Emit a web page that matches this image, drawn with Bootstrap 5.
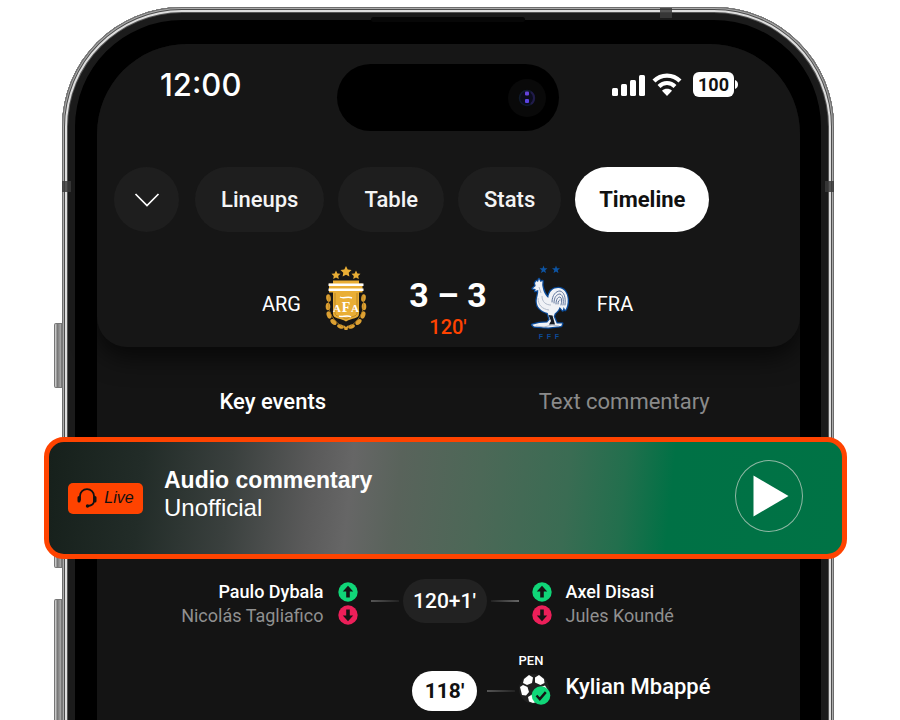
<!DOCTYPE html>
<html lang="en">
<head>
<meta charset="utf-8">
<meta name="viewport" content="width=device-width, initial-scale=1">
<title>Match timeline</title>
<link href="https://cdn.jsdelivr.net/npm/bootstrap@5.3.0/dist/css/bootstrap.min.css" rel="stylesheet">
<style>
  body { background: #fff; color: #fff; font-family: Roboto, "Liberation Sans", sans-serif; font-weight: 500; font-size: 22px; line-height: 28px; }
  .stage { padding: 7px 66px 0 62px; min-height: 100vh; }
  .phone { min-height: calc(100vh + 33px); margin-bottom: -40px; padding: 37px 34px 0 35px; background: #000; border-radius: 120px 120px 0 0;
    box-shadow: inset 0 0 0 1px #6d6d6d, inset 0 0 0 2px #a9a9a9, inset 0 0 0 3px #4c4c4c, inset 0 0 0 5px #dedede, inset 0 0 0 6px #555, inset 0 0 0 13px #1b1b1b; }
  .screen { background: #141414; border-radius: 90px 90px 0 0; min-height: calc(100vh - 4px); }
  .side-key { position: absolute; left: -8px; width: 9px; border: 1px solid #777; border-right-width: 2px; background: linear-gradient(90deg, #ddd, #777 40%, #aaa); border-radius: 2px 0 0 2px; }
  .key-a { top: 316px; height: 65px; }
  .key-b { top: 500px; height: 61px; }
  .key-c { top: 592px; bottom: 0; }
  .band { position: absolute; background: #3b3b3b; opacity: .85; }
  .band-l { left: 0; top: 174px; width: 9px; height: 11px; }
  .band-r { right: 0; top: 174px; width: 9px; height: 11px; }
  .band-t { right: 162px; top: 1px; width: 12px; height: 10px; }
  .slit { position: absolute; top: 10px; left: 40%; width: 20%; height: 5px; background: #070707; border-radius: 3px; }
  .match-head { background: #161616; border-radius: 90px 90px 30px 30px; box-shadow: 0 10px 26px rgba(0,0,0,.65); padding: 20px 18px 7px 17px; }
  .status { display: grid; grid-template-columns: 1fr 222px 1fr; }
  .clock { font-family: Inter, sans-serif; font-size: 31px; line-height: 42px; padding-left: 46px; }
  .indicators { padding-right: 43px; height: 42px; gap: 7px; }
  .island { height: 67px; border-radius: 34px; background: #000; padding-right: 12px; }
  .chips { gap: 14px; margin-top: 36px; }
  .chip { border: 0; border-radius: 34px; height: 65px; background: #1e1e1e; color: #f4f4f4; padding: 0 26px; font-weight: 500; font-size: 22px; line-height: 28px; }
  .chip-round { width: 65px; padding: 0; margin-right: 2px; }
  .chip-on { background: #fff; color: #111; padding: 0 24px; font-weight: 700; }
  .score { display: grid; grid-template-columns: 1fr 38px 64px 112px 64px 38px 1fr; column-gap: 14px; margin-top: 32px; align-items: center; }
  .team { font-size: 20px; font-weight: 400; padding-top: 4px; }
  .tally { padding-top: 12px; }
  .goals { font-weight: 700; font-size: 34px; line-height: 38px; }
  .minute { color: #ff4300; font-size: 20px; line-height: 26px; }
  .views { padding: 39px 0 19px; }
  .view { color: #8a8a8a; text-decoration: none; line-height: 32px; font-weight: 400; }
  .view-on { color: #fff; font-weight: 500; }
  .audio { position: relative; margin: 0 -47px 0 -53px; height: 122px; border: 5px solid #ff4300; border-radius: 20px; padding: 0 39px 0 19px;
    background: linear-gradient(96deg, #16201b 0%, #222c28 12%, #3a403e 23%, #5a5a5a 33%, #666 38%, #59635b 44%, #4c6857 54%, #3a6c53 65%, #226f4d 72%, #007145 78%, #007345 100%);
    font-family: "Liberation Sans", Arial, sans-serif; }
  .live { background: #ff4300; color: #111; border-radius: 5px; width: 75px; height: 31px; font-size: 16px; font-style: italic; font-weight: 400; gap: 7px; }
  .audio-copy { font-size: 23px; line-height: 28px; margin-left: 21px; padding-bottom: 8px; }
  .audio-note { font-size: 24px; }
  .play { width: 68px; height: 72px; border: 1px solid #8fb8a4; border-radius: 50%; background: transparent; padding: 0 0 0 4px; margin-bottom: 5px; }
  .event { display: grid; grid-template-columns: 1fr 46px 32px 84px 32px 46px 1fr; padding-right: 8px; }
  .event-a { margin-top: 20px; margin-bottom: 25px; }
  .event-b { align-items: end; }
  .names { font-size: 18px; line-height: 24px; padding: 1px 1px 0; }
  .dim { color: #909090; font-weight: 400; }
  .swap { gap: 3px; padding-top: 3px; }
  .pill { background: #222; border-radius: 22px; height: 44px; font-size: 21px; }
  .pill-on { background: #fff; color: #111; width: 65px; height: 40px; font-weight: 700; }
  .dash { height: 2px; width: 28px; background: linear-gradient(90deg, #555, #222); }
  .dash-r { background: linear-gradient(90deg, #222, #666); }
  .rail { height: 44px; }
  .rail-b { height: 40px; }
  .pen { font-size: 13px; line-height: 15px; margin-bottom: 5px; }
  .scorer { height: 48px; padding-left: 1px; }
  .ball { padding-bottom: 6px; }
</style>
</head>
<body>
<div class="stage overflow-hidden">
  <div class="phone position-relative">
    <span class="side-key key-a"></span><span class="side-key key-b"></span><span class="side-key key-c"></span>
    <span class="band band-l"></span><span class="band band-r"></span><span class="band band-t"></span><span class="slit"></span>
    <main class="screen">
      <header class="match-head">
        <div class="status">
          <div class="clock">12:00</div>
          <div class="island d-flex align-items-center justify-content-end">
            <svg width="40" height="40" viewBox="0 0 40 40" aria-hidden="true"><circle cx="20" cy="20" r="19" fill="#090909"/><circle cx="20" cy="20" r="7.500" fill="#0b0c1c" stroke="#101b2e" stroke-width="1.500"/><path d="M24 14a7.500 7.500 0 0 1 0 12" fill="none" stroke="#211b4b" stroke-width="2"/><rect x="18" y="13.500" width="4" height="4" rx="1" fill="#6544dc"/><rect x="18" y="21" width="4" height="4" rx="1" fill="#5a43e2"/></svg>
          </div>
          <div class="indicators d-flex align-items-center justify-content-end">
            <svg width="33" height="24" viewBox="0 0 33 24" fill="#fff" aria-hidden="true"><rect x="0" y="15" width="6" height="8" rx="1.500"/><rect x="9" y="11" width="6" height="12" rx="1.500"/><rect x="18" y="7" width="6" height="16" rx="1.500"/><rect x="27" y="2" width="6" height="21" rx="1.500"/></svg>
            <svg width="30" height="24" viewBox="0 0 30 24" aria-hidden="true"><path d="M2 8C9 .8 21 .8 28 8" fill="none" stroke="#fff" stroke-width="4.200"/><path d="M7 13.500c4.500-4.700 11.500-4.700 16 0" fill="none" stroke="#fff" stroke-width="4"/><path d="M15 23l-5-5.200c2.800-2.600 7.200-2.600 10 0z" fill="#fff"/></svg>
            <svg class="ms-1" width="46" height="26" viewBox="0 0 46 26" role="img" aria-label="Battery 100"><rect x="0" y="0" width="41" height="25" rx="6" fill="#fff"/><path d="M42 8c4 1 4 8 0 9z" fill="#fff"/><text x="20.500" y="19" text-anchor="middle" font-family="Roboto, sans-serif" font-size="18" font-weight="700" fill="#111">100</text></svg>
          </div>
        </div>
        <nav class="chips d-flex">
          <button type="button" class="chip chip-round" aria-label="Collapse"><svg width="26" height="16" viewBox="0 0 26 16" fill="none" stroke="#fff" stroke-width="1.700"><path d="M1.500 1L13 12.500 24.500 1"/></svg></button>
          <button type="button" class="chip">Lineups</button>
          <button type="button" class="chip">Table</button>
          <button type="button" class="chip">Stats</button>
          <button type="button" class="chip chip-on">Timeline</button>
        </nav>
        <div class="score text-center">
          <span></span>
          <span class="team">ARG</span>
          <svg width="42" height="72" viewBox="0 0 42 72" role="img" aria-label="Argentina crest" class="mx-auto">
            <g fill="#e9ae35">
              <path d="M21 0l1.700 3.500 3.800.500-2.800 2.700.7 3.900L21 8.700l-3.400 1.900.7-3.900L15.500 4l3.800-.5z"/>
              <path d="M11 4.500l1.400 2.900 3.100.400-2.300 2.200.6 3.100-2.800-1.500-2.800 1.500.6-3.100-2.300-2.200 3.100-.4zM31 4.500l1.400 2.900 3.100.400-2.300 2.200.6 3.100-2.800-1.500-2.800 1.500.6-3.100-2.300-2.200 3.100-.4z"/>
              <path d="M8 14.500h26v3h3.500v9H34v21c0 6-7 4-13 8-6-4-13-2-13-8v-21H4v-9h4z"/>
            </g>
            <path d="M3.500 17.500h35V20h-35zM3.500 22.500h35V25h-35z" fill="#fff"/>
            <path d="M10 27v20c0 4 6 3 11 6 5-3 11-2 11-6V27" fill="none" stroke="#a97823" stroke-width=".7"/>
            <g fill="#dca032">
              <ellipse cx="3.500" cy="32" rx="2.300" ry="3.800" transform="rotate(-8 3.500 32)"/><ellipse cx="3" cy="40.500" rx="2.300" ry="3.800"/><ellipse cx="4" cy="49" rx="2.300" ry="3.800" transform="rotate(-18 4 49)"/><ellipse cx="8.500" cy="56" rx="2.200" ry="3.600" transform="rotate(-48 8.500 56)"/><ellipse cx="15.500" cy="60.500" rx="2" ry="3.500" transform="rotate(-70 15.500 60.500)"/>
              <ellipse cx="38.500" cy="32" rx="2.300" ry="3.800" transform="rotate(8 38.500 32)"/><ellipse cx="39" cy="40.500" rx="2.300" ry="3.800"/><ellipse cx="38" cy="49" rx="2.300" ry="3.800" transform="rotate(18 38 49)"/><ellipse cx="33.500" cy="56" rx="2.200" ry="3.600" transform="rotate(48 33.500 56)"/><ellipse cx="26.500" cy="60.500" rx="2" ry="3.500" transform="rotate(70 26.500 60.500)"/>
              <path d="M18.500 59l2.500 2 2.500-2-1 5h-3z"/>
            </g>
            <path d="M4.500 29c-2.500 12-1 22 13 32M37.500 29c2.500 12 1 22-13 32" fill="none" stroke="#b9831f" stroke-width=".8"/>
            <g fill="#fff" font-family="Liberation Serif, serif" font-weight="700" text-anchor="middle"><text x="12" y="46" font-size="11">A</text><text x="21" y="46" font-size="14">F</text><text x="30" y="46" font-size="11">A</text></g>
            <path d="M15 31c3 2 8-1 12 1M14 50c3 2 8-2 12 1" fill="none" stroke="#fff" stroke-width="1.500"/>
          </svg>
          <div class="tally"><div class="goals text-nowrap">3 – 3</div><div class="minute">120′</div></div>
          <svg width="48" height="76" viewBox="21 6 48 76" role="img" aria-label="France crest" class="mx-auto">
            <path d="M38.500 7.500l1 2.700 3 .1-2.300 1.900.8 2.800-2.500-1.600-2.500 1.600.8-2.800-2.300-1.900 3-.1zM51 7.500l1 2.700 3 .1-2.300 1.900.8 2.800-2.500-1.600-2.500 1.600.8-2.800-2.300-1.900 3-.1z" fill="#0d54a3"/>
            <g fill="#f0f2f6" stroke="#0a4a98" stroke-width="2.600" stroke-linejoin="round" paint-order="stroke">
              <path d="M30 25l1.500-2 1.500 1 1-3 1.500 3 2-1-.3 4c.8 5 2 9 6 13 1-7 5-10 10-10 6 0 9 5 9.500 11 .3 5-1 9-2.500 11l-1.500-3-1 3.500-3-3.500c-1 3-3 5-5 6.500l-1 3 3 7h5.500l-1 2.500-13 1.500-14-1-2-1.800 7-1.700 8-.5 2.500-3-2-6.500c-7-2-11-6-11-12 0-4 2-7 1.500-11l-3 1 .5-2-3-.5 3-2.500z"/>
            </g>
            <path d="M43.500 57l2.500 6-2 3.500h6l-2.500-9z" fill="#151a22"/>
            <g fill="none" stroke="#516993" stroke-width=".9" stroke-linecap="round"><path d="M47 44c0-7 4-11 8-11 4 1 6 6 5 14M49 45c0-6 3-9 6-9 3 1 4 6 3 11M51 46c0-5 2-7 4-7 2 1 2 4 1 8M53 46c0-3 1-4 2-4"/></g>
            <g fill="none" stroke="#a9b3c4" stroke-width=".9"><path d="M33 40c0 7 4 11 11 12M37 38c0 6 4 9 9 9M34 29l2 6M31 68l8 1 8-2 7 1"/></g>
            <g fill="#0d4a98" font-family="Liberation Sans, sans-serif" font-size="7" font-weight="700" text-anchor="middle"><text x="36" y="81">F</text><text x="44" y="81">F</text><text x="52" y="81">F</text></g>
          </svg>
          <span class="team">FRA</span>
          <span></span>
        </div>
      </header>

      <nav class="views row g-0 text-center">
        <a href="#" class="view view-on col-6">Key events</a>
        <a href="#" class="view col-6">Text commentary</a>
      </nav>

      <section class="audio d-flex align-items-center">
        <span class="live d-flex align-items-center justify-content-center flex-shrink-0">
          <svg width="20" height="20" viewBox="0 0 20 20" fill="none" stroke="#111" stroke-width="1.800" aria-hidden="true"><path d="M3 12.500V8a7 6.800 0 0 1 14 0v5c0 3-2 4.500-6 5"/><path d="M2 9.500v3.500M18 9.500v3.500" stroke-width="3" stroke-linecap="round"/><circle cx="10.500" cy="18" r="1.700" fill="#111" stroke="none"/></svg>
          Live
        </span>
        <div class="audio-copy flex-grow-1"><div class="fw-bold">Audio commentary</div><div class="audio-note fw-normal">Unofficial</div></div>
        <button type="button" class="play d-flex align-items-center justify-content-center flex-shrink-0" aria-label="Play"><svg width="36" height="42" viewBox="0 0 36 42"><path d="M.500.500v41L35.500 21z" fill="#fff"/></svg></button>
      </section>

      <section class="event event-a">
        <div class="names text-end text-nowrap"><div>Paulo Dybala</div><div class="dim">Nicolás Tagliafico</div></div>
        <div class="swap d-flex flex-column align-items-center">
          <svg width="20" height="20" viewBox="0 0 20 20" aria-hidden="true"><circle cx="10" cy="10" r="9.700" fill="#10d678"/><path d="M10 3.800l5.200 5.600h-3.400v6H8.200v-6H4.800z" fill="#141414"/></svg>
          <svg width="20" height="20" viewBox="0 0 20 20" aria-hidden="true"><circle cx="10" cy="10" r="9.700" fill="#ec1f59"/><path d="M10 16.200l5.200-5.600h-3.400v-6H8.200v6H4.800z" fill="#141414"/></svg>
        </div>
        <div class="rail d-flex align-items-center"><span class="dash"></span></div>
        <div class="pill d-flex align-items-center justify-content-center">120+1′</div>
        <div class="rail d-flex align-items-center justify-content-end"><span class="dash dash-r"></span></div>
        <div class="swap d-flex flex-column align-items-center">
          <svg width="20" height="20" viewBox="0 0 20 20" aria-hidden="true"><circle cx="10" cy="10" r="9.700" fill="#10d678"/><path d="M10 3.800l5.200 5.600h-3.400v6H8.200v-6H4.800z" fill="#141414"/></svg>
          <svg width="20" height="20" viewBox="0 0 20 20" aria-hidden="true"><circle cx="10" cy="10" r="9.700" fill="#ec1f59"/><path d="M10 16.200l5.200-5.600h-3.400v-6H8.200v6H4.800z" fill="#141414"/></svg>
        </div>
        <div class="names text-nowrap"><div>Axel Disasi</div><div class="dim">Jules Koundé</div></div>
      </section>

      <section class="event event-b">
        <span></span><span></span><span></span>
        <div class="pill pill-on d-flex align-items-center justify-content-center mx-auto">118′</div>
        <div class="rail-b d-flex align-items-center"><span class="dash"></span></div>
        <div class="ball d-flex flex-column align-items-start">
          <span class="pen">PEN</span>
          <svg width="32" height="32" viewBox="1 0 32 32" aria-hidden="true"><circle cx="16" cy="16" r="15" fill="#202020"/><path d="M6 6l5-4 4 2.500L14 10l-5 2-4-2zM17 4.500L21 2l5 4 .5 4-4 2-5.500-2.500zM2 14l3-2 4.500 2 1.500 5-3 3.500L4 22zM10 24l4-2.500 5 1.500v6l-4 1-4-1.500zM23 14l4-1.500 2.500 4L27 20l-4-2z" fill="#fff"/><circle cx="23" cy="22.500" r="9.300" fill="#10d678"/><path d="M18.500 22.500l3.300 3.600 6-7" fill="none" stroke="#141414" stroke-width="2.400"/></svg>
        </div>
        <div class="scorer d-flex align-items-center text-nowrap">Kylian Mbappé</div>
      </section>
    </main>
  </div>
</div>
<script src="https://cdn.jsdelivr.net/npm/bootstrap@5.3.0/dist/js/bootstrap.bundle.min.js"></script>
</body>
</html>
